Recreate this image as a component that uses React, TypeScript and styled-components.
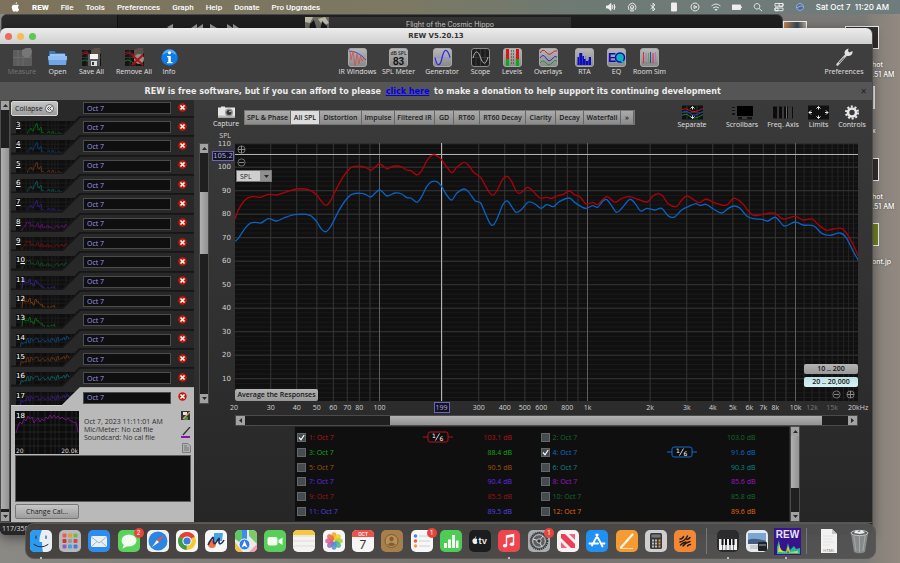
import React from "react";
import styled, { createGlobalStyle, css } from "styled-components";

const GlobalStyle = createGlobalStyle`
  * { box-sizing: border-box; }
  html, body, #root { height: 100%; margin: 0; }
  body { overflow: hidden; font-family: "Open Sans", "Noto Sans", sans-serif; font-size: 7px; }
  button, input, select, textarea { font: inherit; margin: 0; }
  button { cursor: pointer; border: 0; padding: 0; }
`;

/* ---------- desktop ---------- */

const Desktop = styled.div`
  position: relative;
  height: 100vh;
  overflow: hidden;
  background: linear-gradient(90deg, #8b8984 0%, #77736e 50%, #7b7a79 96%, #858079 97%, #938a82 100%);
`;

const MenuBar = styled.nav`
  display: flex;
  align-items: center;
  justify-content: space-between;
  height: 14px;
  padding: 0 11px;
  color: #fff;
  font-family: Roboto, sans-serif;
  font-size: 8px;
  font-weight: 500;
  background: linear-gradient(90deg, #7d735c 0%, #7c7862 45%, #6d7a74 65%, #6f7c7d 100%);
`;

const MenuGroup = styled.div<{ $gap: number }>`
  display: flex;
  align-items: center;
  gap: ${(p) => p.$gap}px;
  white-space: nowrap;
`;

const MenuItem = styled.button<{ $strong?: boolean }>`
  background: none;
  color: inherit;
  font-weight: ${(p) => (p.$strong ? 800 : 500)};
`;

const Clock = styled.span`
  font-family: Inter, sans-serif;
`;

const PlayerWindow = styled.section`
  position: absolute;
  top: 14px;
  left: 1px;
  right: 117px;
  height: 40px;
  display: flex;
  border-radius: 6px 6px 0 0;
  overflow: hidden;
  border: 1px solid #4a4a4a;
  background: #1f1f1f;
`;

const PlayerSide = styled.div`
  width: 116px;
  background: #2a2a2a;
  border-right: 1px solid #111;
`;

const PlayerTransport = styled.div`
  display: flex;
  justify-content: center;
  width: 187px;
  padding-top: 9px;
`;

const PlayerTrack = styled.div`
  display: flex;
  width: 266px;
  height: 26px;
  margin-top: 2px;
  background: #343434;
  color: #cfcfcf;
  font-family: Inter, sans-serif;
  font-size: 7px;
  line-height: 14px;
`;

const TrackName = styled.span`
  flex: 1;
  padding-top: 1px;
  text-align: center;
`;

const DesktopFile = styled.figure<{ $top: number; $right?: number }>`
  position: absolute;
  top: ${(p) => p.$top}px;
  right: ${(p) => p.$right || 0}px;
  width: 32px;
  margin: 0;
  color: #fff;
  font-family: Inter, sans-serif;
  font-size: 7px;
  font-weight: 500;
  line-height: 10px;
  text-shadow: 0 0 2px #0008;
  white-space: nowrap;
`;

const FilePicture = styled.div<{ $tone: string; $width?: number }>`
  width: ${(p) => p.$width || 11}px;
  height: 23px;
  border: 1px solid #eee;
  background: ${(p) => p.$tone};
`;

const FileName = styled.figcaption`
  padding: 11px 0 0 4px;
`;

/* ---------- REW window ---------- */

const AppWindow = styled.main`
  position: absolute;
  top: 28px;
  left: 0;
  right: 28px;
  bottom: 28px;
  display: flex;
  flex-direction: column;
  overflow: hidden;
  border-radius: 6px;
  background: #2b2b2b;
  color: #e2e2e2;
  box-shadow: 1px 0 0 #4d4d4d, 0 3px 12px #0007;
`;

const TitleBar = styled.header`
  display: grid;
  grid-template-columns: 1fr auto 1fr;
  align-items: center;
  height: 16px;
  padding: 0 5px;
  background: linear-gradient(#ececec, #d0d0d0);
`;

const Title = styled.h1`
  margin: 0;
  color: #333;
  font-family: "DejaVu Sans", sans-serif;
  font-size: 7px;
  font-weight: 700;
`;

const Lights = styled.div`
  display: flex;
  gap: 5px;
`;

const Light = styled.button<{ $tone: string }>`
  width: 7px;
  height: 7px;
  border-radius: 50%;
  background: ${(p) => p.$tone};
`;

const Toolbar = styled.div`
  display: flex;
  justify-content: space-between;
  height: 38px;
  padding: 4px 8px 0 2px;
  background: #3e3e3e;
`;

const ToolGroup = styled.div`
  display: flex;
`;

const Tool = styled.button<{ $width: number; $dim?: boolean; $icon?: number }>`
  display: flex;
  flex-direction: column;
  align-items: center;
  width: ${(p) => p.$width}px;
  background: none;
  color: ${(p) => (p.$dim ? "#777" : "#e0e0e0")};
  line-height: 10px;
  white-space: nowrap;
  svg { height: ${(p) => p.$icon || 19}px; }
`;

const Donation = styled.p`
  display: flex;
  align-items: center;
  height: 18px;
  margin: 0;
  padding: 0 5px;
  background: #555;
  color: #ececec;
  font-family: "DejaVu Sans", sans-serif;
  font-size: 8px;
  font-weight: 700;
`;

const DonationText = styled.span`
  flex: 1;
  text-align: center;
  white-space: nowrap;
  a { margin: 0 2px; color: #0000f0; }
`;

const CloseBanner = styled.button`
  background: none;
  color: #222;
  font-size: 8px;
`;

const Workspace = styled.div`
  display: flex;
  flex: 1;
  min-height: 0;
  background: linear-gradient(#3a3a3a, #333 40%, #262626);
`;

const StatusBar = styled.footer`
  height: 13px;
  padding-left: 2px;
  border-top: 1px solid #555;
  background: #262626;
  color: #ddd;
  line-height: 12px;
`;

/* ---------- scroll bars ---------- */

const Bar = styled.div<{ $row?: boolean }>`
  display: flex;
  flex-direction: ${(p) => (p.$row ? "row" : "column")};
  border: 1px solid #4b4b4b;
  background: #1f1f1f;
  ${(p) => (p.$row ? css`height: 11px;` : css`width: 10px;`)}
`;

const BarButton = styled.button`
  display: grid;
  place-items: center;
  flex: 0 0 9px;
  background: #a2a2a2;
`;

const Track = styled.div<{ $grow: number }>`
  flex: ${(p) => p.$grow} 0 0;
`;

const Thumb = styled(Track)<{ $row?: boolean }>`
  background: ${(p) => (p.$row ? "linear-gradient(#b0b0b0, #929292)" : "linear-gradient(90deg, #b0b0b0, #929292)")};
`;

const arrows: Record<string, string> = {
  up: "M0 4L2.500 1L5 4z",
  down: "M0 1L2.500 4L5 1z",
  left: "M4 0L1 2.500L4 5z",
  right: "M1 0L4 2.500L1 5z",
};

function Arrow({ to }: { to: string }) {
  return (
    <svg width="5" height="5" viewBox="0 0 5 5"><path d={arrows[to]} fill="#2a2a2a" /></svg>
  );
}

function ScrollBar({ row, parts }: { row?: boolean; parts: [number, number, number] }) {
  return (
    <Bar $row={row}>
      <BarButton aria-label="Scroll back"><Arrow to={row ? "left" : "up"} /></BarButton>
      <Track $grow={parts[0]} />
      <Thumb $row={row} $grow={parts[1]} />
      <Track $grow={parts[2]} />
      <BarButton aria-label="Scroll forward"><Arrow to={row ? "right" : "down"} /></BarButton>
    </Bar>
  );
}

/* ---------- measurement list ---------- */

const Sidebar = styled.aside`
  display: flex;
  flex-direction: column;
  width: 183px;
  margin: 0 5px 0 1px;
`;

const List = styled.ol`
  flex: 1;
  display: grid;
  grid-template-rows: 16px repeat(15, 1fr);
  min-height: 0;
  margin: 0;
  padding: 0;
  list-style: none;
`;

const Entry = styled.li<{ $first?: boolean }>`
  position: relative;
  display: grid;
  grid-template-columns: 72px 88px 1fr;
  align-items: start;
  padding-top: ${(p) => (p.$first ? 2 : 5)}px;
  background: #292929;
`;

const EntryShape = styled.svg`
  position: absolute;
  inset: 0;
  width: 100%;
  height: 100%;
`;

const EntryNumber = styled.span`
  position: relative;
  padding-left: 5px;
  color: #fff;
  font-family: "DejaVu Sans", sans-serif;
  font-size: 7px;
  line-height: 8px;
`;

const NameInput = styled.input`
  position: relative;
  width: 100%;
  height: 12px;
  padding: 0 3px;
  border: 1px solid #4c4c4c;
  border-radius: 0;
  background: #0f0f0f;
  color: #9c98ee;
  font-size: 7px;
`;

const RemoveButton = styled.button`
  position: relative;
  justify-self: center;
  width: 9px;
  height: 12px;
  background: none;
`;

const CollapseButton = styled.button`
  position: relative;
  display: flex;
  align-items: center;
  justify-content: space-between;
  width: 47px;
  height: 15px;
  margin-top: -1px;
  padding: 0 3px;
  border: 1px solid #d8d8d8;
  border-radius: 2px;
  background: linear-gradient(#c4c4c4, #9c9c9c);
  color: #1b1b1b;
`;

const Card = styled.section`
  display: flex;
  flex-direction: column;
  height: 116px;
  padding: 5px 3px 3px 4px;
  background: #b9b9b9;
  color: #2e2e2e;
`;

const CardTop = styled.div`
  display: grid;
  grid-template-columns: 64px 1fr 10px;
  gap: 5px;
  height: 44px;
`;

const CardMeta = styled.p`
  margin: 7px 0 0;
  line-height: 8px;
  white-space: nowrap;
`;

const CardTools = styled.div`
  display: grid;
  align-content: space-between;
  justify-items: center;
  padding-bottom: 2px;
  button { width: 10px; height: 10px; background: none; }
`;

const Notes = styled.textarea`
  display: block;
  width: 100%;
  height: 47px;
  border: 1px solid #5c5c5c;
  resize: none;
  background: #0f0f0f;
  color: #ccc;
`;

const CalButton = styled.button`
  width: 64px;
  height: 15px;
  margin-top: 2px;
  border: 1px solid #777;
  border-radius: 2px;
  background: linear-gradient(#c6c6c6, #9d9d9d);
  color: #1f1f1f;
`;

const green = "#087a12";
const entries: { n: string; tone: string; kind: number; key?: number }[] = [
  { n: "3", tone: green, kind: 0, key: 0 },
  { n: "4", tone: "#0a4584", kind: 0, key: 0 },
  { n: "5", tone: "#7c3a10", kind: 0, key: 0 },
  { n: "6", tone: "#0b6868", kind: 0, key: 0 },
  { n: "7", tone: "#3a1c98", kind: 0, key: 0 },
  { n: "8", tone: "#700e8a", kind: 1, key: 0 },
  { n: "9", tone: "#820c0c", kind: 1, key: 0 },
  { n: "10", tone: "#0c5522", kind: 1, key: 1 },
  { n: "11", tone: "#36289c", kind: 2 },
  { n: "12", tone: "#8c4208", kind: 2 },
  { n: "13", tone: green, kind: 2 },
  { n: "14", tone: "#0a4c90", kind: 3 },
  { n: "15", tone: "#743610", kind: 3 },
  { n: "16", tone: "#0b6868", kind: 3 },
  { n: "17", tone: "#3d1c94", kind: 3 },
];

/* Each shape: the x where the trace starts, then a height for every 2 units. */
const thumbShapes: [start: number, heights: number[]][] = [
  [15, [14, 11, 9, 10, 8, 4, 9, 8, 13, 13, 14, 12, 13, 12, 14, 13, 13, 14, 13]],
  [10, [13, 11, 8, 5, 6, 9, 8, 10, 7, 10, 8, 11, 10, 9, 11, 10, 12, 10, 8, 11, 9, 10, 8, 11]],
  [10, [13, 4, 8, 7, 5, 9, 10, 6, 8, 9, 11, 13, 14, 13, 14, 12, 12, 14]],
  [8, [13, 10, 11, 9, 6, 10, 5, 8, 6, 5, 9, 8, 6, 9, 7, 8, 6, 7, 8, 5, 8, 6, 5, 7, 3, 6]],
];

const miniPath = (kind: number) => {
  const [start, heights] = thumbShapes[kind];
  return heights.map((y, i) => `${i ? "L" : "M"}${start + i * 2} ${y + 4}l1 ${i % 3 ? -1 : 1}`).join("");
};

function XBadge() {
  return (
    <svg width="9" height="9" viewBox="0 0 9 9">
      <circle cx="4.500" cy="4.500" r="4.200" fill="#c41a0c" />
      <path d="M2.500 2.500L6.500 6.500M6.500 2.500L2.500 6.500" stroke="#fff" strokeWidth="1.600" />
    </svg>
  );
}

const gridLines = [10, 15, 19, 22, 30, 37, 41, 44, 47, 55, 60].map((x) => `M${x} 5V18`).join("");

function EntryRow({ n, tone, kind, keyAt, last }: { n: string; tone: string; kind: number; keyAt?: number; last: boolean }) {
  return (
    <Entry>
      <EntryShape viewBox="0 0 183 19" preserveAspectRatio="none" aria-hidden="true">
        <path d="M5 5H68V18H5z" fill="#0e0e0e" />
        <path d={gridLines + "M5 9H68M5 13H68"} stroke="#222" strokeWidth="0.700" />
        <path d={miniPath(kind)} fill="none" stroke={tone} strokeWidth="0.800" />
        <path d="M0 18.500H51L69 1H183V19H0z" fill={last ? "#b9b9b9" : "#282828"} />
        <path d="M0 18.300H51L69 0.700H183" fill="none" stroke={last ? "#d0d0d0" : "#161616"} strokeWidth={last ? 1 : 2} />
      </EntryShape>
      <EntryNumber>
        {keyAt === undefined ? n : <>{n.slice(0, keyAt)}<u>{n[keyAt]}</u></>}
      </EntryNumber>
      <NameInput aria-label={`Name of measurement ${n}`} defaultValue="Oct 7" />
      <RemoveButton aria-label={`Remove measurement ${n}`}><XBadge /></RemoveButton>
    </Entry>
  );
}

function MeasurementList() {
  return (
    <Sidebar>
      <List>
        <Entry $first>
          <CollapseButton>
            Collapse
            <svg width="9" height="9" viewBox="0 0 9 9">
              <circle cx="4.500" cy="4.500" r="4" fill="#eee" stroke="#333" strokeWidth="0.700" />
              <path d="M4.300 2.500L2.500 4.500L4.300 6.500M6.500 2.500L4.700 4.500L6.500 6.500" fill="none" stroke="#222" strokeWidth="0.900" />
            </svg>
          </CollapseButton>
          <NameInput aria-label="Name of measurement 2" defaultValue="Oct 7" />
          <RemoveButton aria-label="Remove measurement 2"><XBadge /></RemoveButton>
        </Entry>
        {entries.map((e, i) => (
          <EntryRow key={e.n} n={e.n} tone={e.tone} kind={e.kind} keyAt={e.key} last={i === entries.length - 1} />
        ))}
      </List>
      <Card>
        <CardTop>
          <svg width="64" height="43" viewBox="0 0 64 43">
            <rect width="64" height="43" fill="#0c0c0c" />
            <path d="M9 0V43M15 0V43M19 0V43M23 0V43M30 0V43M36 0V43M40 0V43M44 0V43M51 0V43M57 0V43M61 0V43M0 7H64M0 14H64M0 21H64M0 28H64M0 35H64" stroke="#2b2b2b" strokeWidth="0.700" />
            <path d="M1 22L3 15L5 11L7 13L9 8L11 10L13 5L15 8L17 6L19 12L21 9L23 7L25 11L27 8L29 10L31 6L33 8L35 4L37 7L39 4L41 7L43 5L45 8L47 6L49 8L51 9L53 7L55 10L57 10L59 12L61 11L63 21" fill="none" stroke="#76128e" strokeWidth="0.900" />
            <text x="1" y="7" fill="#fff" fontSize="7" fontFamily="DejaVu Sans">18</text>
            <text x="1" y="42" fill="#ddd" fontSize="6" fontFamily="DejaVu Sans">20</text>
            <text x="63" y="42" fill="#ddd" fontSize="6" fontFamily="DejaVu Sans" textAnchor="end">20.0k</text>
          </svg>
          <CardMeta>
            Oct 7, 2023 11:11:01 AM<br />Mic/Meter: No cal file<br />Soundcard: No cal file
          </CardMeta>
          <CardTools>
            <button aria-label="Save measurement">
              <svg width="10" height="10" viewBox="0 0 10 10"><path d="M0 0H9V9H0z" fill="#333" /><path d="M2 1H6V4H2z" fill="#e4e4e4" /><path d="M3 6H7V9H3z" fill="#3f8f40" /><path d="M2 8L9 1" stroke="#c9a070" strokeWidth="1.500" /></svg>
            </button>
            <button aria-label="Trace colour">
              <svg width="10" height="11" viewBox="0 0 10 11"><path d="M2 8L9 0" stroke="#333" strokeWidth="1.300" /><path d="M0 9H9V11H0z" fill="#8a12b0" /></svg>
            </button>
            <button aria-label="Notes">
              <svg width="9" height="10" viewBox="0 0 9 10"><path d="M0.500 0.500H6L8.500 3V9.500H0.500z" fill="#b0b0b0" stroke="#7c7c7c" /><path d="M2 3H5M2 5H7M2 7H7" stroke="#777" /></svg>
            </button>
          </CardTools>
        </CardTop>
        <Notes aria-label="Measurement notes" />
        <CalButton>Change Cal...</CalButton>
      </Card>
    </Sidebar>
  );
}

/* ---------- toolbar icons ---------- */

function Plate({ dark, children }: { dark?: boolean; children: React.ReactNode }) {
  return (
    <svg width="19" height="19" viewBox="0 0 19 19">
      <defs>
        <linearGradient id="plate" x1="0" y1="0" x2="0" y2="1">
          <stop offset="0" stopColor="#b8b8b8" /><stop offset="1" stopColor="#888" />
        </linearGradient>
      </defs>
      <rect x="0.500" y="0.500" width="18" height="18" rx="2.500" fill={dark ? "#1e1e20" : "url(#plate)"} stroke={dark ? "#8a8a8a" : "#a8a8a8"} />
      {children}
    </svg>
  );
}

function TraceCard({ children, grey }: { children?: React.ReactNode; grey?: boolean }) {
  return (
    <svg width="19" height="19" viewBox="0 0 19 19">
      <path d="M0 2H19V18H0z" fill={grey ? "#5c5c5c" : "#141414"} />
      <path d="M0 9.500H19M5 2V18M10 2V18" stroke={grey ? "#6a6a6a" : "#333"} />
      {!grey && <path d="M0 5Q4 2 9 7M0 7Q4 3 8 8" stroke="#901818" fill="none" />}
      {!grey && <path d="M0 13Q4 10 9 16" stroke="#147a30" fill="none" />}
      <path d="M9 2L13 0L18 0L19 4L17 9L12 10L9 7z" fill={grey ? "#777" : "#5d5048"} />
      {children}
    </svg>
  );
}

const icons: Record<string, React.ReactNode> = {
  measure: <TraceCard grey />,
  open: (
    <svg width="19" height="19" viewBox="0 0 19 19">
      <path d="M1 4Q1 3 2 3H6.500L8 5H16Q17.500 5 17.500 6.500V9H1z" fill="#3f78bd" />
      <path d="M2 6H17V9H2z" fill="#9cc4f0" />
      <path d="M0 8H19L18 17H1z" fill="#6fa6e8" /><path d="M0 8H19V12H0.500z" fill="#8cbcf2" />
    </svg>
  ),
  save: (
    <TraceCard>
      <path d="M7 6H17Q18 6 18 7V18H6V7Q6 6 7 6z" fill="#5a5a5a" /><path d="M8 6H16V11H8z" fill="#f4f4f4" /><path d="M9 13H15V18H9z" fill="#ddd" /><path d="M10 14H12V17H10z" fill="#333" />
    </TraceCard>
  ),
  remove: (
    <TraceCard>
      <circle cx="14" cy="11" r="5" fill="#8f8f8f" /><path d="M7 7L18 17M18 7L7 17" stroke="#b80d0d" strokeWidth="2" />
    </TraceCard>
  ),
  info: (
    <svg width="19" height="19" viewBox="0 0 19 19">
      <circle cx="9.500" cy="9.500" r="8.300" fill="#0f7be4" /><path d="M2.500 7Q9 2 16.500 7Q15 1.500 9.500 1.500T2.500 7z" fill="#58a9f2" />
      <circle cx="9.500" cy="4.800" r="1.600" fill="#fff" /><path d="M7 8H10.800V14H12.500V15.300H7V14H8.300V9.300H7z" fill="#fff" />
    </svg>
  ),
  ir: (
    <Plate><path d="M1 3Q10 3 18 12" fill="none" stroke="#4545c8" /><path d="M2 3L3 12L5 3L7 18L9 6L11 16L12.500 8L14 13L16 10L17 12" fill="none" stroke="#c85858" strokeWidth="0.900" /></Plate>
  ),
  spl: (
    <Plate>
      <text x="9.500" y="7" textAnchor="middle" fontSize="5" fontFamily="Open Sans" fontWeight="600" fill="#222">dB SPL</text>
      <text x="9.500" y="16.500" textAnchor="middle" fontSize="10" fontFamily="Liberation Sans" fontWeight="700" fill="#111">83</text>
    </Plate>
  ),
  generator: (
    <Plate><path d="M2 9.500H17" stroke="#8b8bd0" /><path d="M2 9.500C4 19 7 19 9 10S14 -1 17 9.500" fill="#a9a9dc" fillOpacity="0.500" stroke="#2b2bd0" strokeWidth="1.200" /></Plate>
  ),
  scope: (
    <Plate dark><path d="M1 9.500H18M9.500 1V18M5 1V18M14 1V18" stroke="#444" strokeWidth="0.700" /><path d="M2 10C4 2 7 2 9.500 9.500S15 17 17 9" fill="none" stroke="#b5b5b5" /></Plate>
  ),
  levels: (
    <Plate>
      <path d="M3 1H6V11H3zM13 1H16V11H13z" fill="#e01212" /><path d="M3 11H6V18H3zM13 11H16V18H13z" fill="#0da81c" />
      <path d="M8 3H11M8 6H11M8 9H11M8 12H11M8 15H11" stroke="#333" strokeDasharray="1 1" />
    </Plate>
  ),
  overlays: (
    <Plate>
      <path d="M1 5Q4 0 7 4T13 5T18 3" fill="none" stroke="#c82626" /><path d="M1 10Q4 5 7 10T13 11T18 9" fill="none" stroke="#2a2ac8" /><path d="M1 15Q4 11 7 15T13 15T18 13" fill="none" stroke="#219330" />
    </Plate>
  ),
  rta: (
    <Plate><path d="M2.500 17V9H4V5H7V8H9V11H11V13H13V12H14V9H16V17z" fill="#0b0bb8" /><path d="M4.500 5V17M7.500 5V17M10.500 8V17M13.500 9V17" stroke="#5e5ecc" strokeWidth="0.500" /></Plate>
  ),
  eq: (
    <Plate>
      <circle cx="13" cy="9.500" r="4.500" fill="#10b4b8" stroke="#0a0ac0" strokeWidth="1.500" />
      <text x="1" y="14" fontSize="12" fontFamily="Liberation Sans" fontWeight="700" fill="#0a0ac0">E</text>
      <path d="M13 11L17 15" stroke="#10b4b8" strokeWidth="2" />
    </Plate>
  ),
  room: (
    <Plate>
      <path d="M2 15H17" stroke="#777" strokeWidth="0.600" /><path d="M3.500 4V15M13 5V15" stroke="#d03434" /><path d="M6 5V15M15.500 4V15" stroke="#c26cc2" /><path d="M8.500 5V15" stroke="#45b445" /><path d="M10.500 4V15" stroke="#3c3cb8" />
    </Plate>
  ),
  preferences: (
    <svg width="19" height="19" viewBox="0 0 19 19">
      <path d="M2.500 16.500L11.500 6.500" stroke="#d0d0d0" strokeWidth="2.600" strokeLinecap="round" /><path d="M4 15L9 9.500" stroke="#555" />
      <path d="M9.500 5Q9.500 1.500 13.500 0.500L13 3L14.500 4.500L17.500 3Q18 7.500 13.500 8Q10.500 8.500 9.500 5z" fill="#e2e2e2" />
    </svg>
  ),
  capture: (
    <svg width="19" height="13" viewBox="0 0 19 13">
      <path d="M1 2H4V1H8V2H18V12H1z" fill="#e6e6e6" /><path d="M1 10H18V12H1z" fill="#bbb" /><circle cx="12" cy="7" r="4" fill="#999" /><circle cx="12" cy="7" r="2.500" fill="#333" /><circle cx="13" cy="6" r="0.800" fill="#ddd" />
    </svg>
  ),
  separate: (
    <svg width="21" height="14" viewBox="0 0 21 14">
      <path d="M0 0H21V14H0z" fill="#111" /><path d="M0 7H21M5 0V14M15 0V14" stroke="#333" />
      <path d="M0 4Q4 2 8 5T21 3" fill="none" stroke="#c01818" /><path d="M0 7Q4 4 8 8T21 6" fill="none" stroke="#2c40d0" /><path d="M0 10Q4 7 8 11T21 9" fill="none" stroke="#128a28" />
      <path d="M10.500 1V4M8.500 3L10.500 1L12.500 3M10.500 10V13M8.500 11L10.500 13L12.500 11" fill="none" stroke="#ddd" />
    </svg>
  ),
  scrollbars: (
    <svg width="23" height="15" viewBox="0 0 23 15">
      <path d="M6 1H22V11H6z" fill="#000" /><path d="M1 2H4V10H1zM7 12H21V14.500H7z" fill="#141414" /><path d="M1 4H4M1 7H4M11 13H16" stroke="#666" />
    </svg>
  ),
  freq: (
    <svg width="22" height="14" viewBox="0 0 22 14">
      <path d="M0.500 0.500H21.500V13.500H0.500z" fill="#0c0c0c" stroke="#3c3c3c" /><path d="M6 1V13M11 1V13M14.500 1V13M17 1V13M19 1V13" stroke="#686868" />
    </svg>
  ),
  limits: (
    <svg width="21" height="14" viewBox="0 0 21 14">
      <path d="M0 0H21V14H0z" fill="#101010" />
      <path d="M8.500 3L10.500 1L12.500 3M8.500 11L10.500 13L12.500 11M3 5L1 7L3 9M18 5L20 7L18 9M10.500 1V4M10.500 10V13M1 7H4M17 7H20" fill="none" stroke="#e8e8e8" />
    </svg>
  ),
  controls: (
    <svg width="14" height="14" viewBox="0 0 14 14">
      <circle cx="7" cy="7" r="6" fill="none" stroke="#e8e8e8" strokeWidth="2" strokeDasharray="2 1.770" /><circle cx="7" cy="7" r="4" fill="none" stroke="#e8e8e8" strokeWidth="2.600" />
    </svg>
  ),
};

type ToolSpec = [icon: string, label: string, width: number];
const fileTools: ToolSpec[] = [["measure", "Measure", 40], ["open", "Open", 31], ["save", "Save All", 37], ["remove", "Remove All", 48], ["info", "Info", 22]];
const panelTools: ToolSpec[] = [["ir", "IR Windows", 42], ["spl", "SPL Meter", 40], ["generator", "Generator", 47], ["scope", "Scope", 30], ["levels", "Levels", 33], ["overlays", "Overlays", 39], ["rta", "RTA", 34], ["eq", "EQ", 30], ["room", "Room Sim", 36]];
const graphTools: ToolSpec[] = [["separate", "Separate", 56], ["scrollbars", "Scrollbars", 44], ["freq", "Freq. Axis", 38], ["limits", "Limits", 33], ["controls", "Controls", 34]];

function Tools({ list, icon }: { list: ToolSpec[]; icon?: number }) {
  return (
    <ToolGroup>
      {list.map(([name, label, width]) => (
        <Tool key={name} $width={width} $dim={name === "measure"} $icon={icon}>{icons[name]}{label}</Tool>
      ))}
    </ToolGroup>
  );
}

/* ---------- graph ---------- */

const Main = styled.section`
  display: flex;
  flex-direction: column;
  flex: 1;
  min-width: 0;
`;

const GraphBar = styled.div`
  display: flex;
  height: 30px;
  padding: 5px 3px 0 0;
`;

const Tabs = styled.div`
  display: flex;
  height: 15px;
  margin: 5px auto 0 2px;
  border: 1px solid #777;
`;

const Tab = styled.button<{ $width: number; $on?: boolean }>`
  width: ${(p) => p.$width}px;
  border-right: 1px solid #666;
  background: ${(p) => (p.$on ? "#dcdcdc" : "linear-gradient(#ababab, #8b8b8b)")};
  color: #1c1c1c;
  font-weight: 600;
  white-space: nowrap;
`;

const GraphArea = styled.div`
  flex: 1;
  display: grid;
  grid-template: 13px 1fr 14px 11px / 25px 1fr 14px;
  min-height: 0;
  color: #d2d2d2;
`;

const AxisTitle = styled.span`
  padding-right: 4px;
  text-align: right;
  line-height: 11px;
`;

const LevelAxis = styled.div`
  position: relative;
  grid-area: 2 / 1;
  font-family: "DejaVu Sans", sans-serif;
`;

const Level = styled.span`
  position: absolute;
  right: 4px;
  line-height: 7px;
  transform: translateY(-50%);
`;

const readout = css`
  border: 1px solid #6a66b8;
  background: #141420;
  color: #aaa8e0;
`;

const LevelReadout = styled(Level)`
  ${readout}
  right: 1px;
  line-height: 8px;
`;

const FreqAxis = styled.div`
  position: relative;
  grid-area: 3 / 2;
`;

const Freq = styled.span<{ $dim?: boolean }>`
  position: absolute;
  top: 2px;
  line-height: 10px;
  transform: translateX(-50%);
  color: ${(p) => (p.$dim ? "#777" : "inherit")};
`;

const FreqReadout = styled(Freq)`
  ${readout}
  top: 1px;
  padding: 0 1px;
  line-height: 9px;
`;

const Plot = styled.div`
  position: relative;
  grid-area: 2 / 2;
  display: flex;
  flex-direction: column;
  justify-content: space-between;
  align-items: flex-start;
  background: #101010;
`;

const PlotDrawing = styled.svg`
  position: absolute;
  inset: 0;
  width: 100%;
  height: 100%;
`;

const PlotTop = styled.div`
  position: relative;
  display: grid;
  gap: 4px;
  padding: 2px 0 0 2px;
`;

const PlotBottom = styled.div`
  position: relative;
  display: flex;
  justify-content: space-between;
  align-items: flex-end;
  width: 100%;
`;

const ZoomButton = styled.button`
  width: 9px;
  height: 9px;
  background: none;
`;

const SelectBox = styled.label`
  display: grid;
  grid-template-columns: 24px 10px;
  height: 12px;
  margin: -1px 0 0 -1px;
  border: 1px solid #777;
  background: linear-gradient(90deg, #cfcfcf 23px, #8f8f8f 23px);
  svg { grid-area: 1 / 2; place-self: center; }
`;

const TraceSelect = styled.select`
  grid-area: 1 / 1 / 2 / 3;
  width: 100%;
  padding: 0 3px;
  appearance: none;
  border: 0;
  background: none;
  color: #1b1b1b;
`;

const PlotButton = styled.button<{ $on?: boolean; $wide?: boolean }>`
  width: ${(p) => (p.$wide ? 83 : 54)}px;
  height: ${(p) => (p.$wide ? 12 : 10)}px;
  border-radius: 2px;
  background: ${(p) => (p.$on ? "linear-gradient(#bfe0e4, #d8f2f5)" : "linear-gradient(#b4b4b4, #989898)")};
  color: #161616;
  font-weight: 600;
  line-height: 10px;
  white-space: nowrap;
`;

const RangeBox = styled.div`
  display: grid;
  gap: 3px;
  justify-items: end;
`;

const RangeZoom = styled.div`
  display: flex;
  gap: 5px;
  padding: 0 3px 2px 0;
`;

const HorizontalScroll = styled.div`
  grid-area: 4 / 2;
`;

/* The plot's drawing units: 623 wide by 258 high, log frequency across, dB down. */
const PLOT_W = 623;
const PLOT_H = 258;
const freqX = (f: number) => 352.5 + 208 * Math.log10(f / 1000);
const levelY = (db: number) => (110 - db) * 2.35 + 0.7;
const percent = (v: number, whole: number) => `${(v / whole) * 100}%`;

/* Curve segments are stored in thirds of a drawing unit, each from its own start. */
type Segment = [ox: number, oy: number, pts: number[]];
const redTrace: Segment[] = [
  [-30, -43, [90,357,100,330,120,300,140,290,165,292,190,283,215,285,240,277,275,267,310,269,335,285,350,305,363,316,375,305,390,275,410,238,430,210,445,200,470,199,485,204,497,211,508,203,522,192,533,197,546,207,560,200,575,198,590,201,605,210,618,212,636,225,650,212,665,183,680,166,690,165,700,170]],
  [205, -43, [3,177,20,200,35,218,50,202,72,187,85,195,100,216,122,232,135,255,150,280,160,285,172,270,188,238,202,229,215,245,228,273,237,280,247,275,262,262,275,269,300,294,320,292,335,295,350,288,370,283,388,273,405,285,420,290,438,312,458,307,472,314,487,300,502,290,525,307,545,295,568,290,595,298,622,306,640,287,656,281,668,288,685,312,710,319]],
  [435, -13, [35,210,50,198,65,205,88,218,108,207,130,217,155,225,172,224,190,205,205,210,220,223,235,243,250,256,275,254,300,249,315,250,340,267,375,259,400,270,427,267,445,284,470,301,490,297,515,295,530,310,550,345,565,378]],
];
const blueTrace: Segment[] = [
  [-30, -43, [90,424,100,415,120,385,135,370,150,367,168,369,190,356,215,363,240,352,275,343,315,346,335,365,350,388,363,395,378,378,400,335,420,303,440,283,470,280,483,284,497,291,510,280,522,270,532,275,546,288,570,279,590,282,605,293,618,294,636,307,650,290,665,260,680,245,695,245]],
  [205, -43, [3,257,20,285,35,300,50,280,72,267,85,275,105,302,122,309,135,338,150,370,160,375,172,355,188,315,202,303,215,320,228,337,245,328,265,306,285,312,303,325,320,314,340,320,358,305,388,294,405,308,437,325,458,317,473,322,487,305,499,298,512,313,530,337,545,325,570,298,585,310,602,333,620,325,645,330,665,325,685,348]],
  [435, -13, [5,262,15,260,35,240,55,230,77,221,90,226,108,223,130,237,155,249,175,235,192,228,210,235,230,258,250,266,275,268,293,273,317,262,343,288,375,276,400,285,432,288,455,310,480,316,510,309,528,322,550,365,565,391]],
];

function tracePath(segments: Segment[]) {
  const pts: [number, number][] = [];
  segments.forEach(([ox, oy, raw]) => {
    for (let i = 0; i < raw.length; i += 2) pts.push([ox + raw[i] / 3, oy + raw[i + 1] / 3]);
  });
  let d = `M${pts[0][0]} ${pts[0][1]}`;
  for (let i = 0; i < pts.length - 1; i++) {
    const a = pts[Math.max(0, i - 1)];
    const b = pts[i];
    const c = pts[i + 1];
    const e = pts[Math.min(pts.length - 1, i + 2)];
    const xs = (c[0] - b[0]) / 3;
    const slope1 = (c[1] - a[1]) / (c[0] - a[0]);
    const slope2 = (e[1] - b[1]) / (e[0] - b[0]);
    d += `C${b[0] + xs} ${b[1] + xs * slope1} ${c[0] - xs} ${c[1] - xs * slope2} ${c[0]} ${c[1]}`;
  }
  return d;
}

const levels = [110, 100, 90, 80, 70, 60, 50, 40, 30, 20, 10];
const freqLabels: [number, string][] = [[20, "20"], [30, "30"], [40, "40"], [50, "50"], [60, "60"], [70, "70"], [80, "80"], [100, "100"], [300, "300"], [400, "400"], [500, "500"], [600, "600"], [800, "800"], [1000, "1k"], [2000, "2k"], [3000, "3k"], [4000, "4k"], [5000, "5k"], [6000, "6k"], [7000, "7k"], [8000, "8k"], [10000, "10k"], [12000, "12k"], [15000, "15k"], [20000, "20kHz"]];
const freqLines = [30, 40, 50, 60, 70, 80, 90, 200, 300, 400, 500, 600, 700, 800, 900, 2000, 3000, 4000, 5000, 6000, 7000, 8000, 9000];
const fineFreqs = [11000, 12000, 13000, 14000, 15000, 16000, 17000, 18000, 19000];
const fineLevels = Array.from({ length: 55 }, (_, i) => 110 - i * 2);
const vertical = (fs: number[]) => fs.map((f) => `M${freqX(f)} 0V${PLOT_H}`).join("");
const horizontal = (ls: number[]) => ls.map((l) => `M0 ${levelY(l)}H${PLOT_W}`).join("");

function ZoomGlyph({ plus }: { plus?: boolean }) {
  return (
    <svg width="9" height="9" viewBox="0 0 9 9">
      <circle cx="4.500" cy="4.500" r="3.600" fill="none" stroke="#8a8a8a" strokeWidth="0.800" />
      <path d={plus ? "M1 4.500H8M4.500 1V8" : "M2 4.500H7"} stroke="#8a8a8a" />
    </svg>
  );
}

function Graph() {
  return (
    <GraphArea>
      <AxisTitle>SPL</AxisTitle>
      <LevelAxis>
        {levels.map((l) => <Level key={l} style={{ top: percent(levelY(l), PLOT_H) }}>{l}</Level>)}
        <LevelReadout style={{ top: percent(levelY(105.2) + 1, PLOT_H) }}>105.2</LevelReadout>
      </LevelAxis>
      <Plot>
        <PlotDrawing viewBox={`0 0 ${PLOT_W} ${PLOT_H}`} preserveAspectRatio="none" aria-hidden="true">
          <path d={horizontal(fineLevels)} stroke="#1b1b1b" />
          <path d={vertical(fineFreqs)} stroke="#242424" />
          <path d={horizontal(levels) + vertical(freqLines)} stroke="#363636" />
          <path d={vertical([100, 1000, 10000])} stroke="#5e5e5e" />
          <path d={`M0 11.500H${PLOT_W}M206.500 0V${PLOT_H}`} stroke="#b4b4b4" />
          <path d={tracePath(redTrace)} fill="none" stroke="#b30008" strokeWidth="1.300" />
          <path d={tracePath(blueTrace)} fill="none" stroke="#0a62c4" strokeWidth="1.300" />
        </PlotDrawing>
        <PlotTop>
          <ZoomButton aria-label="Zoom in level"><ZoomGlyph plus /></ZoomButton>
          <ZoomButton aria-label="Zoom out level"><ZoomGlyph /></ZoomButton>
          <SelectBox>
            <Arrow to="down" />
            <TraceSelect aria-label="Vertical axis"><option>SPL</option></TraceSelect>
          </SelectBox>
        </PlotTop>
        <PlotBottom>
          <PlotButton $wide>Average the Responses</PlotButton>
          <RangeBox>
            <PlotButton>10 .. 200</PlotButton>
            <PlotButton $on>20 .. 20,000</PlotButton>
            <RangeZoom>
              <ZoomButton aria-label="Zoom out frequency"><ZoomGlyph /></ZoomButton>
              <ZoomButton aria-label="Zoom in frequency"><ZoomGlyph plus /></ZoomButton>
            </RangeZoom>
          </RangeBox>
        </PlotBottom>
      </Plot>
      <FreqAxis>
        {freqLabels.map(([f, label]) => (
          <Freq key={f} $dim={f === 12000 || f === 15000} style={{ left: percent(freqX(f), PLOT_W) }}>{label}</Freq>
        ))}
        <FreqReadout style={{ left: percent(206.5, PLOT_W) }}>199</FreqReadout>
      </FreqAxis>
      <HorizontalScroll><ScrollBar row parts={[145, 434, 26]} /></HorizontalScroll>
    </GraphArea>
  );
}

/* ---------- legend ---------- */

const LegendArea = styled.div`
  display: flex;
  height: 96px;
  margin: 0 72px 0 84px;
`;

const Legend = styled.div`
  flex: 1;
  display: grid;
  grid-template-columns: 1fr 1fr;
  grid-auto-rows: 1fr;
  padding: 3px 5px 2px 2px;
  border: 1px solid #262626;
  background: #0f0f0f;
`;

const LegendRow = styled.div<{ $tone: string }>`
  display: grid;
  grid-template-columns: 126px 30px 59px 1fr;
  align-items: center;
  color: ${(p) => p.$tone};
`;

const LegendLabel = styled.label`
  display: flex;
  align-items: center;
  gap: 3px;
`;

const Tick = styled.input`
  width: 9px;
  height: 9px;
  appearance: none;
  border: 1px solid #62676a;
  background: #454b4e;
`;

const TickBox = styled.span`
  position: relative;
  display: grid;
  svg { position: absolute; inset: 0; pointer-events: none; visibility: hidden; }
  input:checked + svg { visibility: visible; }
`;

const LegendLevel = styled.span`
  text-align: right;
`;

const legend: [string, string, string, boolean?][] = [
  ["1: Oct 7", "103.1 dB", "#b01518", true], ["2: Oct 7", "103.0 dB", "#12692c"],
  ["3: Oct 7", "88.4 dB", "#10a81a"], ["4: Oct 7", "91.6 dB", "#126ccc", true],
  ["5: Oct 7", "90.5 dB", "#a05212"], ["6: Oct 7", "90.3 dB", "#0e8688"],
  ["7: Oct 7", "90.4 dB", "#6428f0"], ["8: Oct 7", "85.6 dB", "#a014c8"],
  ["9: Oct 7", "85.5 dB", "#9c1618"], ["10: Oct 7", "85.8 dB", "#126c30"],
  ["11: Oct 7", "89.5 dB", "#5244e0"], ["12: Oct 7", "89.6 dB", "#e06c12"],
];

function Smoothing({ tone }: { tone: string }) {
  return (
    <svg width="30" height="12" viewBox="0 0 30 12">
      <path d="M0 6H30" stroke={tone} /><rect x="5" y="1" width="20" height="10" rx="2" fill="#0f0f0f" stroke={tone} />
      <text x="9" y="7" fontSize="6" fill="#fff" fontFamily="DejaVu Sans">1</text><path d="M12.500 9.500L16.500 2.500" stroke="#fff" strokeWidth="0.800" /><text x="16.500" y="10" fontSize="6" fill="#fff" fontFamily="DejaVu Sans">6</text>
    </svg>
  );
}

function LegendPanel() {
  return (
    <LegendArea>
      <Legend>
        {legend.map(([name, level, tone, on]) => (
          <LegendRow key={name} $tone={tone}>
            <LegendLabel>
              <TickBox>
                <Tick type="checkbox" defaultChecked={on} />
                <svg width="9" height="9" viewBox="0 0 9 9"><path d="M2 4.500L4 6.800L7.200 2" fill="none" stroke="#fff" strokeWidth="1.200" /></svg>
              </TickBox>
              {name}
            </LegendLabel>
            {on ? <Smoothing tone={tone} /> : <span />}
            <LegendLevel>{level}</LegendLevel>
          </LegendRow>
        ))}
      </Legend>
      <ScrollBar parts={[0, 53, 25]} />
    </LegendArea>
  );
}

const tabs: [string, number][] = [["SPL & Phase", 46], ["All SPL", 29], ["Distortion", 42], ["Impulse", 33], ["Filtered IR", 40], ["GD", 19], ["RT60", 26], ["RT60 Decay", 46], ["Clarity", 30], ["Decay", 28], ["Waterfall", 37], ["»", 13]];

const ListScroll = styled.div`
  display: flex;
  width: 10px;
  margin: 43px 1px 118px 0;
`;

/* ---------- dock ---------- */

const Dock = styled.nav`
  position: absolute;
  left: 25px;
  right: 24px;
  bottom: 4px;
  display: flex;
  align-items: center;
  height: 36px;
  border: 1px solid #5b5856;
  border-radius: 9px;
  background: linear-gradient(90deg, #423f3df2, #4a4847f2 60%, #525252f2);
`;

const DockApps = styled.div`
  flex: 1;
  display: flex;
`;

const DockSlot = styled.div<{ $basis?: number }>`
  flex: ${(p) => (p.$basis ? `0 0 ${p.$basis}px` : "1 1 0")};
  display: grid;
  place-items: center;
`;

const DockButton = styled.button`
  position: relative;
  display: grid;
  place-items: center;
  width: 24px;
  height: 27px;
  background: none;
`;

const DockDivider = styled.div`
  width: 1px;
  height: 26px;
  margin: 0 6px;
  background: #777;
`;

const DockBadge = styled.span`
  position: absolute;
  top: 0;
  right: -3px;
  width: 10px;
  height: 10px;
  border-radius: 50%;
  background: #e5463c;
  color: #fff;
  font-family: Inter, sans-serif;
  font-size: 6px;
  line-height: 10px;
  text-align: center;
`;

const RunningDot = styled.span`
  position: absolute;
  bottom: -4px;
  left: 11px;
  width: 2px;
  height: 2px;
  border-radius: 50%;
  background: #ddd;
`;

function AppIcon({ fill, children }: { fill: string; children?: React.ReactNode }) {
  return (
    <svg width="22" height="22" viewBox="0 0 22 22">
      <rect width="22" height="22" rx="5" fill={fill} />
      {children}
    </svg>
  );
}

const petals = ["#f5a623", "#f0d022", "#a6cf3a", "#4bb58a", "#4a90d9", "#8a6bc4", "#d65a9a", "#ee6644"];
const padColors = ["#e8604c", "#e0a030", "#6cba4a", "#c43a3a", "#999", "#d84848", "#8860c0", "#40a0d8", "#4878d0"];

type DockApp = [name: string, icon: React.ReactNode, badge?: string, running?: boolean];
const dockApps: DockApp[] = [
  ["Finder", <AppIcon fill="#e9eef4"><path d="M5 0H12Q9 7 9.500 12H12Q12 18 13 22H5Q0 22 0 17V5Q0 0 5 0z" fill="#2b9bf0" /><path d="M6 6V8.500M16 6V8.500M4 14.500Q11 19.500 18 14.500" fill="none" stroke="#1d2c44" strokeLinecap="round" /></AppIcon>, undefined, true],
  ["Launchpad", <AppIcon fill="#b9b9bd">{padColors.map((c, i) => <rect key={c} x={3.500 + (i % 3) * 5.500} y={3.500 + Math.floor(i / 3) * 5.500} width="4" height="4" rx="1" fill={c} />)}</AppIcon>],
  ["Mail", <AppIcon fill="#2d8cf0"><rect x="3" y="6" width="16" height="11" rx="1.500" fill="#e9f0f6" /><path d="M3.500 7L11 13L18.500 7M3.500 16.500L9 11.500M18.500 16.500L13 11.500" fill="none" stroke="#8ea6bd" strokeWidth="0.800" /></AppIcon>],
  ["Messages", <AppIcon fill="#5ad35c"><ellipse cx="11" cy="10.500" rx="7.500" ry="6" fill="#f2fff0" /><path d="M6 14L4.500 18.500L10 16z" fill="#f2fff0" /></AppIcon>, "2"],
  ["Safari", <AppIcon fill="#f0f0f0"><circle cx="11" cy="11" r="9.500" fill="#2a86e0" /><path d="M17 5L12 12.200L9.800 10z" fill="#f05040" /><path d="M5 17L12 12.200L9.800 10z" fill="#f4f4f4" /></AppIcon>],
  ["Chrome", <AppIcon fill="#f6f6f6"><circle cx="11" cy="11" r="9" fill="#f8c832" /><path d="M11 11L3.200 6.500A9 9 0 0 1 18.800 6.500z" fill="#e04434" /><path d="M11 11L3.200 6.500A9 9 0 0 0 10.500 20z" fill="#3c9e4c" /><circle cx="11" cy="11" r="4.600" fill="#fff" /><circle cx="11" cy="11" r="3.600" fill="#3c7ce0" /></AppIcon>],
  ["Freeform", <AppIcon fill="#f6f6f6"><path d="M9 3H18L17 11H9z" fill="#40a8e8" /><circle cx="7" cy="14" r="4" fill="#ef7040" /><path d="M3 15C6 9 9 5 8.500 9S9 16 12 11S14 9 14 12S17 14 19 10" fill="none" stroke="#22305c" strokeWidth="1.600" /></AppIcon>],
  ["Maps", <AppIcon fill="#e9ece6"><path d="M0 5Q0 0 5 0H7V14L0 9z" fill="#62c466" /><path d="M14 0H17Q22 0 22 5V14L14 6z" fill="#7acb6a" /><path d="M7 0H12V12H7z" fill="#3e8cf0" /><path d="M0 12L8 22H5Q0 22 0 17z" fill="#f2c24c" /><path d="M14 22L22 14V17Q22 22 17 22z" fill="#f0a0b0" /><circle cx="9.500" cy="14.500" r="5.500" fill="#2d7de8" stroke="#fff" /><path d="M9.500 10.500L12.500 17.500L9.500 16L6.500 17.500z" fill="#fff" /></AppIcon>],
  ["FaceTime", <AppIcon fill="#58cf58"><rect x="3.500" y="7" width="10" height="8.500" rx="2" fill="#f4fff2" /><path d="M14.500 10L18.500 7.500V15L14.500 12.500z" fill="#f4fff2" /></AppIcon>],
  ["Notes", <AppIcon fill="#f4f3f0"><path d="M5 0H17Q22 0 22 5H0Q0 0 5 0z" fill="#f7c744" /><path d="M0 6H22M0 11H22M0 16H22" stroke="#cfcdc8" strokeWidth="0.600" /></AppIcon>],
  ["Photos", <AppIcon fill="#f6f6f6">{petals.map((c, i) => <ellipse key={c} cx="11" cy="6.200" rx="2.700" ry="4" fill={c} fillOpacity="0.850" transform={`rotate(${i * 45} 11 11)`} />)}</AppIcon>],
  ["Calendar", <AppIcon fill="#f6f6f6"><path d="M5 0H17Q22 0 22 5V7H0V5Q0 0 5 0z" fill="#e8524a" /><text x="11" y="5.500" fontSize="4.500" textAnchor="middle" fill="#fff" fontFamily="Inter" fontWeight="600">OCT</text><text x="11" y="18.500" fontSize="12" textAnchor="middle" fill="#333" fontFamily="Inter">7</text></AppIcon>],
  ["Contacts", <AppIcon fill="#a77f4b"><path d="M21 5V9" stroke="#d55" /><path d="M21 10V13" stroke="#5a5" /><circle cx="10.500" cy="11" r="6.500" fill="#b98f5a" stroke="#7d5c32" /><circle cx="10.500" cy="9" r="2.200" fill="#805f36" /><path d="M6.500 14.500Q10.500 10.500 14.500 14.500Q10.500 18 6.500 14.500z" fill="#805f36" /></AppIcon>],
  ["Reminders", <AppIcon fill="#f7f7f7"><circle cx="4.500" cy="6" r="1.800" fill="#3d88e8" /><circle cx="4.500" cy="11" r="1.800" fill="#e8604a" /><circle cx="4.500" cy="16" r="1.800" fill="#f0a040" /><path d="M8 6H19M8 11H19M8 16H19" stroke="#c4c4c4" strokeWidth="0.800" /></AppIcon>, "1"],
  ["Numbers", <AppIcon fill="#4fcb58"><path d="M4 13H7V18H4zM8 9.500H11V18H8zM12 5H15V18H12zM16 10.500H18.500V18H16z" fill="#f4fff2" /></AppIcon>],
  ["TV", <AppIcon fill="#1b1c1e"><path d="M7 8.500Q5.500 8 4.300 8.800Q2.800 10 3.600 12.300Q4.400 14.500 6 14Q7.500 14.500 8.500 12.500Q7.300 11.500 8.200 9.500Q7.800 8.500 7 8.500zM6 8Q6 6.500 7.300 6.200Q7.300 7.800 6 8z" fill="#eee" /><text x="9.500" y="14" fontSize="9" fill="#eee" fontFamily="Inter" fontWeight="600">tv</text></AppIcon>],
  ["Music", <AppIcon fill="#f0444f"><path d="M8.500 15.500V6L15.500 4.500V14" fill="none" stroke="#fff" strokeWidth="1.400" /><path d="M8 6L16 4.300V6.500L8 8.200z" fill="#fff" /><ellipse cx="7" cy="15.700" rx="2.200" ry="1.800" fill="#fff" /><ellipse cx="14" cy="14.200" rx="2.200" ry="1.800" fill="#fff" /></AppIcon>, undefined, true],
  ["Settings", <AppIcon fill="#a9adb0"><circle cx="11" cy="11" r="8.500" fill="#5b5e61" stroke="#303234" strokeWidth="1.600" strokeDasharray="1.200 0.800" /><circle cx="11" cy="11" r="6.300" fill="none" stroke="#ccc" /><path d="M11 11L5 9M11 11L15 6M11 11L14 17" stroke="#ddd" /><circle cx="11" cy="11" r="2.200" fill="#333" stroke="#ccc" /></AppIcon>, "1"],
  ["News", <AppIcon fill="#f7f3f4"><path d="M4 4H8L18 14V18H14L4 8z" fill="#ee3d55" /><path d="M12 4H18V10zM4 12L10 18H4z" fill="#f2647a" /></AppIcon>],
  ["App Store", <AppIcon fill="#2290f2"><path d="M11.800 4.500L6 15.500M10.200 4.500L16.500 16.500M3.500 13.500H12M15 13.500H18.500" fill="none" stroke="#fff" strokeWidth="1.800" strokeLinecap="round" /></AppIcon>],
  ["Pages", <AppIcon fill="#f49b34"><path d="M5 17.500L16.500 4.500" stroke="#fff3e0" strokeWidth="2.200" strokeLinecap="round" /><path d="M4 18.500H17" stroke="#ffdfae" /></AppIcon>],
  ["Calculator", <AppIcon fill="#cfcfcf"><rect x="5" y="3" width="12" height="16" rx="1.500" fill="#37393b" /><path d="M6.500 4.500H15.500V7.500H6.500z" fill="#777" /><path d="M7 10.500H9M10 10.500H12M7 13.500H9M10 13.500H12M7 16.500H9M10 16.500H12" stroke="#bbb" strokeWidth="1.800" /><path d="M13.500 10.500H15.500M13.500 13.500H15.500M13.500 16.500H15.500" stroke="#f09436" strokeWidth="1.800" /></AppIcon>],
  ["Focusrite", <AppIcon fill="#f28836"><path d="M6 9Q8.500 9 9.500 6.500M6 12Q11 11 13.500 6M6.500 15Q9 12.500 12 12M9 16Q11 13 16 11.500M13.500 16Q14.500 14.500 16.500 14.500M13 9.500Q15 9 16 7.500" fill="none" stroke="#2c1b10" strokeWidth="1.500" strokeLinecap="round" /></AppIcon>],
];
const recentApps: DockApp[] = [
  ["Piano", <AppIcon fill="#2b2b2d"><path d="M2 9H20V20H2z" fill="#f0f0f0" /><path d="M5.500 9V20M9 9V20M13 9V20M16.500 9V20" stroke="#333" strokeWidth="0.700" /><path d="M5.500 9V15M9 9V15M13 9V15M16.500 9V15" stroke="#111" strokeWidth="2" /></AppIcon>, undefined, true],
  ["Preview", <AppIcon fill="#e4eaf0"><path d="M2 3H20V12H2z" fill="#7ba5d2" /><path d="M2 10Q8 7 20 11V14H2z" fill="#455c7c" /><path d="M4 15H12V19H4z" fill="#ccc" /><rect x="12" y="12" width="9" height="9" rx="1" fill="#202326" /><path d="M13 15H20" stroke="#aaa" /></AppIcon>],
  ["REW", <svg width="27" height="27" viewBox="0 0 27 27"><rect width="27" height="27" fill="#37148a" /><path d="M3 26V19L5 12L6 20L9 23H12L14 15L16 22L20 18L22 21L26 20V26z" fill="#22b4a0" /><path d="M4 24L5 16L7 22L12 25L14 18L16 24L24 23V25z" fill="#e8d824" /><path d="M13 25L14 21L15 25z" fill="#e03020" /><text x="13.500" y="9.500" fontSize="10" textAnchor="middle" fill="#e8e4f8" fontFamily="Liberation Sans" fontWeight="700">REW</text></svg>, undefined, true],
];
const stackApps: DockApp[] = [
  ["HTML document", <svg width="18" height="26" viewBox="0 0 18 26"><path d="M1 1H12L17 6V25H1z" fill="#f2f2f2" /><path d="M12 1V6H17z" fill="#c4c4c4" /><path d="M3 8H14M3 11H12M3 14H14M3 17H10" stroke="#ddd" strokeWidth="0.700" /><text x="9" y="23.500" fontSize="4" textAnchor="middle" fill="#777" fontFamily="Inter">HTML</text></svg>],
  ["Trash", <svg width="19" height="25" viewBox="0 0 19 25"><path d="M1 4L4 23Q9.500 25.500 15 23L18 4z" fill="#94989a" fillOpacity="0.800" /><path d="M4 7L6 22M9.500 7V23M15 7L13 22" stroke="#b9bdc0" strokeWidth="0.600" /><ellipse cx="9.500" cy="4" rx="8.500" ry="2.600" fill="#5d6264" stroke="#c4c8ca" /><path d="M4 4L6 1L9 3L12 1L15 4L10 5z" fill="#e8ecec" /></svg>],
];

function DockItems({ apps, basis }: { apps: DockApp[]; basis?: number }) {
  return (
    <>
      {apps.map(([name, icon, badge, running]) => (
        <DockSlot key={name} $basis={basis}>
          <DockButton aria-label={name}>
            {icon}
            {badge && <DockBadge>{badge}</DockBadge>}
            {running && <RunningDot />}
          </DockButton>
        </DockSlot>
      ))}
    </>
  );
}

/* ---------- menu bar glyphs ---------- */

const statusGlyphs = [
  <path d="M0 4H2L5 1.500V8.500L2 6H0zM6.500 3Q7.500 5 6.500 7M8 2Q10 5 8 8" />,
  <path d="M2 8Q0 4 3 2T8 2.500Q10 5.500 8 8M3.500 6.500Q2.500 4 5 3.500T6.500 6.500M5 5.500L3.500 9H6.500z" fill="none" />,
  <path d="M2.500 3L7 7L5 9V1L7 3L2.500 7" fill="none" />,
  <path d="M2.500 1H7.500V9H2.500zM5 4V5" stroke="#eee" />,
  <path d="M5 1A4 4 0 1 0 5.010 1zM4 3.500L7 5L4 6.500z" fill="none" />,
  <path d="M0.500 4Q5 0 9.500 4M2 6Q5 3.500 8 6M4 7.500H6L5 8.500z" fill="none" />,
  <path d="M0 3H8.500V7.500H0zM9.500 4.500V6" />,
  <path d="M4 1.500A2.800 2.800 0 1 0 4.010 1.500zM6 6.500L9 9" fill="none" />,
  <path d="M1 1.500H9V4.200H1zM5 1.500H9V4.200H5zM1 6H9V8.700H1zM1 6H4V8.700H1z" fill="none" />,
  <path d="M5 1.500A3.500 3.500 0 1 0 5.010 1.500zM2 6Q5 3 8 4" fill="#6a5a9c" stroke="#7ac8e0" />,
];

const menuNames = ["File", "Tools", "Preferences", "Graph", "Help", "Donate", "Pro Upgrades"];

export default function App() {
  return (
    <Desktop>
      <GlobalStyle />
      <MenuBar>
        <MenuGroup $gap={12}>
          <svg width="9" height="10" viewBox="0 0 9 10"><path d="M6.200 2.600Q5.300 2.600 4.700 3Q3.600 2.500 2.500 2.700Q0.500 3.300 0.700 5.800Q1 8.500 2.600 9.700Q3.400 9.900 4.500 9.300Q5.500 9.900 6.400 9.700Q7.700 9 8.200 7.300Q6.900 6.600 7 5.200Q7.100 4.200 8 3.500Q7.200 2.600 6.200 2.600zM4.500 2.300Q4.600 0.600 6.200 0Q6.200 1.900 4.500 2.300z" fill="#fff" /></svg>
          <MenuItem $strong>REW</MenuItem>
          {menuNames.map((m) => <MenuItem key={m}>{m}</MenuItem>)}
        </MenuGroup>
        <MenuGroup $gap={11}>
          {statusGlyphs.map((g, i) => <svg key={i} width="10" height="10" viewBox="0 0 10 10" fill="#eee" stroke="#eee" strokeWidth="0.900">{g}</svg>)}
          <Clock>Sat Oct 7&nbsp;&nbsp;11:20 AM</Clock>
        </MenuGroup>
      </MenuBar>
      <DesktopFile $top={21} $right={85}>
        <FilePicture $tone="linear-gradient(90deg, #c08a50, #34445c 60%, #b8a890)" $width={24} />
      </DesktopFile>
      <PlayerWindow>
        <PlayerSide />
        <PlayerTransport>
          <svg width="90" height="8" viewBox="0 0 90 8"><path d="M0 3L6 0V7zM24 4L30 0V7zM30 4L36 0V7zM43 0L50 4L43 7zM60 0L66 4L60 7zM66 0L72 4L66 7z" fill="#999" /></svg>
        </PlayerTransport>
        <PlayerTrack>
          <svg width="24" height="14" viewBox="0 0 24 14"><path d="M0 0H24V14H0z" fill="#6c6c62" /><path d="M0 0H8L5 6L0 5zM13 2L20 0L24 6L18 9z" fill="#bbb8a6" /><path d="M5 7L9 3L12 13H4zM17 4L22 9V14H15z" fill="#17181a" /></svg>
          <TrackName>Flight of the Cosmic Hippo</TrackName>
        </PlayerTrack>
      </PlayerWindow>
      <DesktopFile $top={26} $right={23}>
        <FilePicture $tone="#332c2d" $width={34} />
      </DesktopFile>
      <DesktopFile $top={49}>
        <FileName>hot<br />.51 AM</FileName>
      </DesktopFile>
      <DesktopFile $top={86}>
        <FilePicture $tone="#ddd" $width={7} />
      </DesktopFile>
      <DesktopFile $top={115}>
        <FileName>x</FileName>
      </DesktopFile>
      <DesktopFile $top={158}>
        <FilePicture $tone="#332c2d" />
        <FileName>hot<br />.51 AM</FileName>
      </DesktopFile>
      <DesktopFile $top={223}>
        <FilePicture $tone="#708020" />
        <FileName>ont.jp</FileName>
      </DesktopFile>
      <AppWindow>
        <TitleBar>
          <Lights>
            <Light $tone="#ec6a5e" aria-label="Close" />
            <Light $tone="#f4bf4f" aria-label="Minimise" />
            <Light $tone="#61c554" aria-label="Zoom" />
          </Lights>
          <Title>REW V5.20.13</Title>
          <span />
        </TitleBar>
        <Toolbar>
          <Tools list={fileTools} />
          <Tools list={panelTools} />
          <Tools list={[["preferences", "Preferences", 40]]} />
        </Toolbar>
        <Donation>
          <DonationText>REW is free software, but if you can afford to please <a href="#donate">click here</a> to make a donation to help support its continuing development</DonationText>
          <CloseBanner aria-label="Dismiss">✕</CloseBanner>
        </Donation>
        <Workspace>
          <ScrollBar parts={[38, 362, 3]} />
          <MeasurementList />
          <ListScroll><ScrollBar parts={[39, 62, 140]} /></ListScroll>
          <Main>
            <GraphBar>
              <Tools list={[["capture", "Capture", 32]]} icon={14} />
              <Tabs>
                {tabs.map(([name, width]) => <Tab key={name} $width={width} $on={name === "All SPL"}>{name}</Tab>)}
              </Tabs>
              <Tools list={graphTools} icon={15} />
            </GraphBar>
            <Graph />
            <LegendPanel />
          </Main>
        </Workspace>
        <StatusBar>117/358MB</StatusBar>
      </AppWindow>
      <Dock aria-label="Dock">
        <DockApps><DockItems apps={dockApps} /></DockApps>
        <DockDivider />
        <DockItems apps={recentApps} basis={29} />
        <DockDivider />
        <DockItems apps={stackApps} basis={31} />
      </Dock>
    </Desktop>
  );
}
